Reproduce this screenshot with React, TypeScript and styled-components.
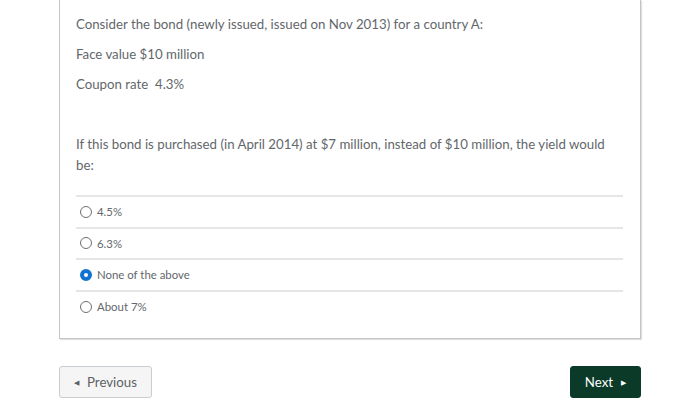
import React, {useState} from 'react';
import styled, {createGlobalStyle} from 'styled-components';

const GlobalStyle = createGlobalStyle`
  body {
    margin: 0;
    background: #ffffff;
    font-family: Lato, "Liberation Sans", sans-serif;
  }
`

const Page = styled.div`
  width: 700px;
  height: 416px;
  padding: 0 59px;
  box-sizing: border-box;
`

const Card = styled.div`
  border: 1px solid #c4c4c4;
  border-top: none;
  box-shadow: 1px 1px 1px rgba(0, 0, 0, 0.12);
  padding: 14px 17px 17px 16px;
  color: #63676b;
`

const Para = styled.p`
  margin: 0 0 9px;
  font-size: 13.25px;
  line-height: 21px;
  min-height: 21px;
`

const Question = styled(Para)`
  margin-bottom: 19px;
  max-width: 535px;
`

const Options = styled.div`
  display: flex;
  flex-direction: column;
`

const OptionRow = styled.label`
  display: flex;
  align-items: center;
  gap: 5px;
  height: 31.6px;
  box-sizing: border-box;
  border-top: 2px solid #e6e6e6;
  padding-left: 4px;
  font-size: 11.4px;
  cursor: pointer;
`

const Radio = styled.span<{checked: boolean}>`
  width: 12px;
  height: 12px;
  border-radius: 50%;
  box-sizing: border-box;
  border: ${p => p.checked ? '4px solid #1272cf' : '1px solid #6f6f6f'};
  background: #fff;
`

const Buttons = styled.div`
  display: flex;
  justify-content: space-between;
  margin-top: 27px;
`

const Button = styled.button<{primary?: boolean}>`
  display: flex;
  align-items: center;
  gap: 8px;
  height: 32px;
  padding: 0 14px;
  border-radius: 3px;
  font-family: Lato, "Liberation Sans", sans-serif;
  font-size: 13.25px;
  border: 1px solid ${p => p.primary ? '#0b3a29' : '#c7cdd1'};
  background: ${p => p.primary ? '#0b3a29' : '#f5f5f5'};
  color: ${p => p.primary ? '#ffffff' : '#5d6165'};
`

const Arrow = styled.span`
  font-size: 7px;
`

const answers = ['4.5%', '6.3%', 'None of the above', 'About 7%']

export default function App() {
    const [picked, setPicked] = useState(2)

    return (
        <Page>
            <GlobalStyle/>
            <Card>
                <Para>Consider the bond (newly issued, issued on Nov 2013) for a country A:</Para>
                <Para>Face value $10 million</Para>
                <Para>Coupon rate&nbsp; 4.3%</Para>
                <Para/>
                <Question>If this bond is purchased (in April 2014) at $7 million, instead of $10 million, the yield would be:</Question>
                <Options>
                    {answers.map((a, i) =>
                        <OptionRow key={a} onClick={() => setPicked(i)}>
                            <Radio checked={picked === i}/>
                            {a}
                        </OptionRow>
                    )}
                </Options>
            </Card>
            <Buttons>
                <Button><Arrow>◀</Arrow>Previous</Button>
                <Button primary>Next<Arrow>▶</Arrow></Button>
            </Buttons>
        </Page>
    )
}
